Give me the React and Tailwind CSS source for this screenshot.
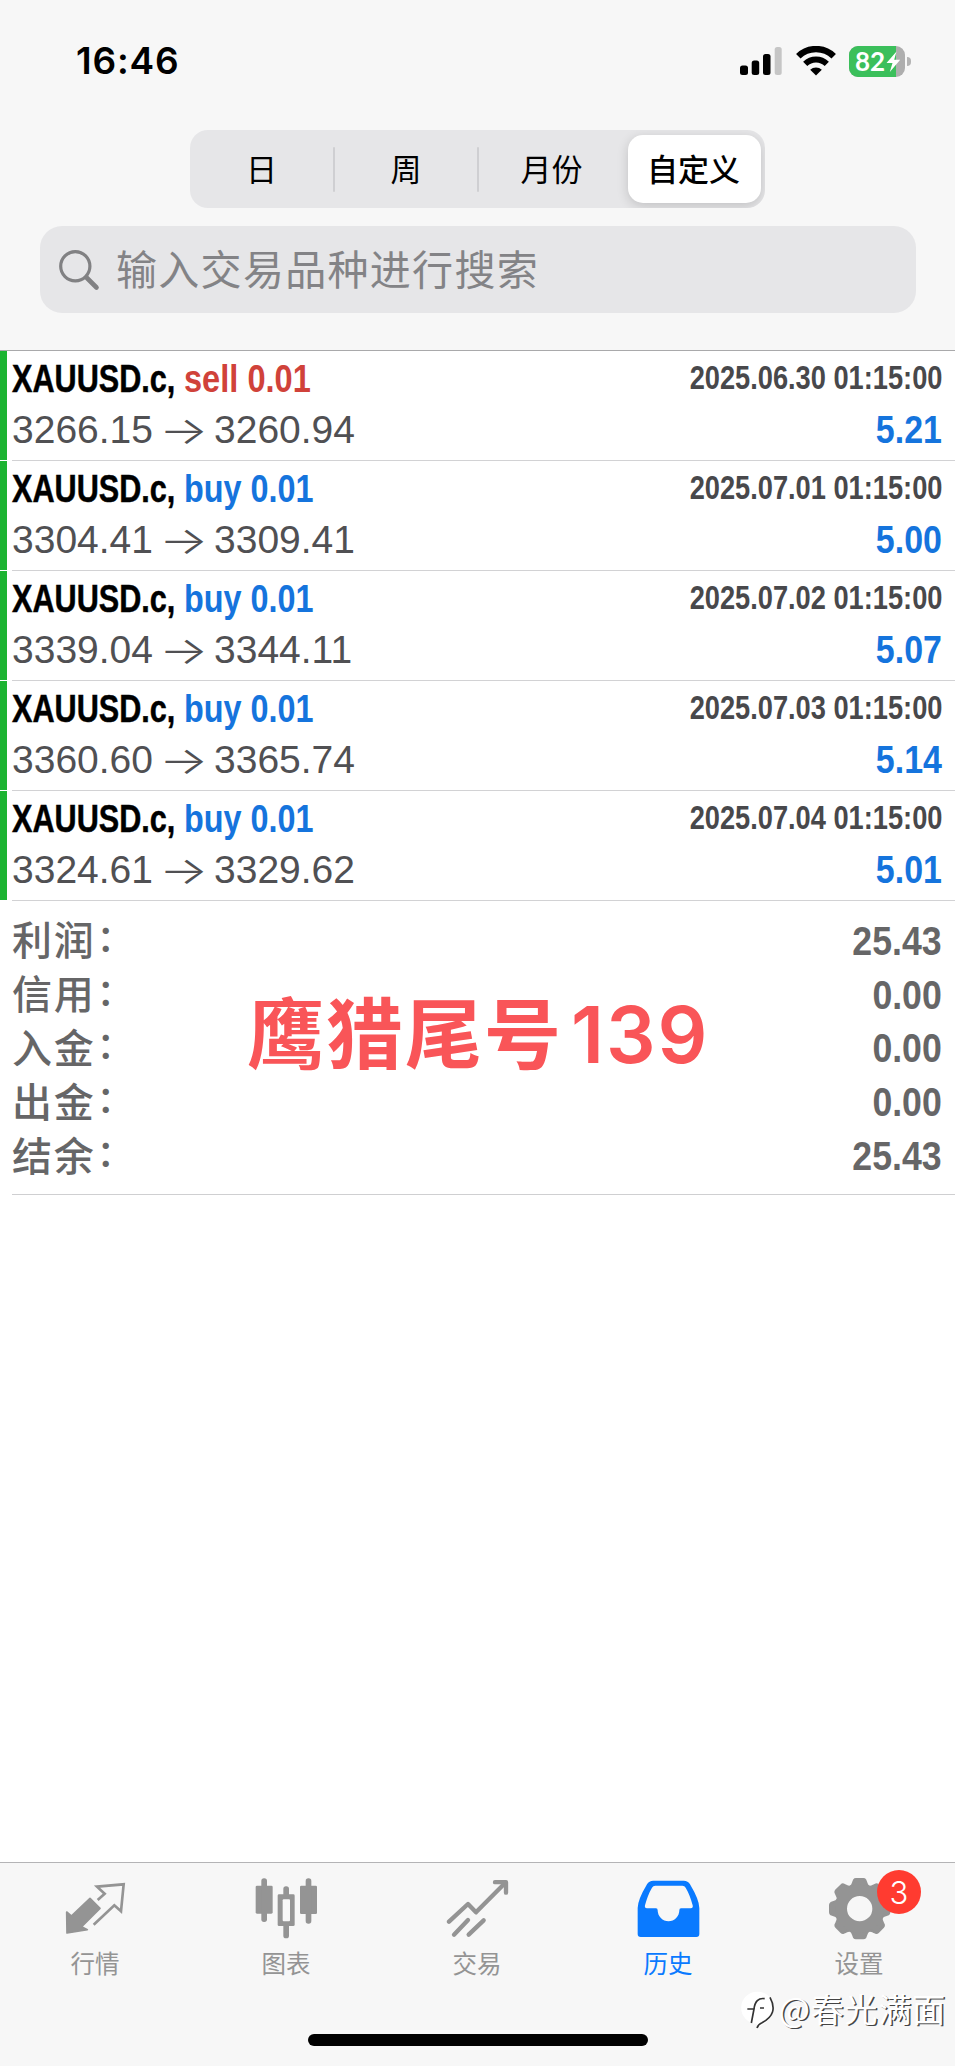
import React from "react";

const deals = [
  { side: "sell", volume: "0.01", open: "3266.15", close: "3260.94", time: "2025.06.30 01:15:00", profit: "5.21" },
  { side: "buy", volume: "0.01", open: "3304.41", close: "3309.41", time: "2025.07.01 01:15:00", profit: "5.00" },
  { side: "buy", volume: "0.01", open: "3339.04", close: "3344.11", time: "2025.07.02 01:15:00", profit: "5.07" },
  { side: "buy", volume: "0.01", open: "3360.60", close: "3365.74", time: "2025.07.03 01:15:00", profit: "5.14" },
  { side: "buy", volume: "0.01", open: "3324.61", close: "3329.62", time: "2025.07.04 01:15:00", profit: "5.01" },
];

const summary = [
  { label: "利润", value: "25.43" },
  { label: "信用", value: "0.00" },
  { label: "入金", value: "0.00" },
  { label: "出金", value: "0.00" },
  { label: "结余", value: "25.43" },
];

const StatusBar = () => (
  <div className="flex h-[130px] items-start justify-between pl-[76px] pr-[44px] pt-[38px]">
    <div className="font-['Inter',sans-serif] text-[37px] leading-[46px] font-semibold tracking-[0.8px] text-black">16:46</div>
    <div className="flex h-[46px] items-center">
      <svg className="mr-[14px]" width="42" height="28" viewBox="0 0 42 28">
        <rect x="0" y="18.5" width="8" height="9.5" rx="2.5" />
        <rect x="11.7" y="13.5" width="7.5" height="14.5" rx="2.5" />
        <rect x="23" y="7" width="7.5" height="21" rx="2.5" />
        <rect x="34.7" y="0" width="7" height="28" rx="2.5" fill="#c6c6c6" />
      </svg>
      <svg className="mr-[13px]" width="40" height="30" viewBox="0 0 40 30">
        <path d="M2.3 10.2A25.5 25.5 0 0 1 37.7 10.2" fill="none" stroke="#000" strokeWidth="6.4" />
        <path d="M9.2 17.9A15.6 15.6 0 0 1 30.8 17.9" fill="none" stroke="#000" strokeWidth="6" />
        <path d="M14.2 23.7A8.4 8.4 0 0 1 25.8 23.7L20 29.5Z" />
      </svg>
      <div className="relative flex h-[31px] w-[56px] items-center overflow-hidden rounded-[9px] bg-[#aeaeae]">
        <div className="flex h-full w-[47px] items-center bg-[#3bbf5b] pb-[1px] pl-[6px] font-['Lato',sans-serif] text-[26px] leading-none font-bold text-white">82</div>
        <svg className="absolute left-[37px] top-[5px]" width="15" height="22" viewBox="0 0 15 22">
          <path d="M10.5 0.5L0.5 12H6.5L3.8 21L14.2 8.8H8.2Z" fill="#fff" />
        </svg>
      </div>
      <div className="ml-[2px] h-[9px] w-[4px] rounded-r-full bg-[#b4b4b4]" />
    </div>
  </div>
);

const PeriodTabs = () => (
  <div className="ml-[190px] flex h-[78px] w-[575px] items-center overflow-hidden rounded-[18px] bg-[#e6e6e8] text-[31px] leading-none text-black">
    <div className="w-[143px] pb-[4px] text-center">日</div>
    <div className="h-[45px] w-[2px] rounded bg-[#cfcfd2]" />
    <div className="w-[142px] pb-[4px] text-center">周</div>
    <div className="h-[45px] w-[2px] rounded bg-[#cfcfd2]" />
    <div className="w-[145px] pb-[4px] text-center">月份</div>
    <div className="ml-[4px] flex h-[68px] w-[133px] items-center justify-center rounded-[15px] bg-white pr-[2px] pb-[4px] font-medium shadow-[0_3px_12px_rgba(0,0,0,0.16)]">
      自定义
    </div>
  </div>
);

const SearchField = () => (
  <div className="mt-[18px] ml-[40px] flex h-[87px] w-[876px] items-center rounded-[22px] bg-[#e6e6e8] pl-[18px]">
    <svg width="42" height="42" viewBox="0 0 42 42" fill="none" stroke="#818183" strokeLinecap="round">
      <circle cx="17.3" cy="17.3" r="14.6" strokeWidth="3.2" />
      <path d="M28.5 28.5L38.5 38.5" strokeWidth="4.6" />
    </svg>
    <span className="ml-[16px] pb-[4px] text-[41px] leading-none tracking-[1.3px] text-[#838386]">输入交易品种进行搜索</span>
  </div>
);

const DealRow = ({ deal }) => (
  <div className="flex h-[110px]">
    <div className="mb-px w-[7px] bg-[#1cb432]" />
    <div className="ml-[5px] flex-1 border-b border-[#d2d2d4] pr-[13px]">
      <div className="flex h-[54px] items-center justify-between font-['Liberation_Sans',sans-serif] font-bold whitespace-nowrap">
        <div className="flex text-[39px] leading-none">
          <span className="w-[172px] origin-left scale-x-[0.785] text-black [-webkit-text-stroke:0.5px]">XAUUSD.c,</span>
          <span className={deal.side === "sell" ? "origin-left scale-x-[0.835] text-[#d0423a]" : "origin-left scale-x-[0.83] text-[#1574dd]"}>
            {deal.side} {deal.volume}
          </span>
        </div>
        <span className="origin-right scale-x-[0.825] pb-[2px] text-[33px] leading-none text-[#48484b]">{deal.time}</span>
      </div>
      <div className="flex h-[49px] items-center justify-between font-['Liberation_Sans',sans-serif] text-[39px] leading-none whitespace-nowrap">
        <div className="flex items-center text-[#505053]">
          <span className="w-[147px]">{deal.open}</span>
          <span className="w-[55px] origin-left scale-x-[1.36] font-['Inter',sans-serif] text-[38px] font-light">→</span>
          <span>{deal.close}</span>
        </div>
        <span className="origin-right scale-x-[0.87] font-bold text-[#1574dd]">{deal.profit}</span>
      </div>
    </div>
  </div>
);

const Summary = () => (
  <div className="relative ml-[12px] h-[294px] border-b border-[#cfcfd1] pt-[12px] pr-[13px] text-[#666667]">
    {summary.map((item) => (
      <div key={item.label} className="flex h-[53.8px] items-center justify-between">
        <div className="flex items-center pb-[3px] text-[40px] leading-none font-medium tracking-[1.8px]">
          <span>{item.label}</span>
          <span className="ml-px pb-[4px] text-[37px]">：</span>
        </div>
        <span className="origin-right scale-x-[0.87] pt-[3px] font-['Liberation_Sans',sans-serif] text-[41px] leading-none font-bold">{item.value}</span>
      </div>
    ))}
    {/* account note laid over the totals */}
    <div className="absolute top-[79px] left-[235px] flex items-center text-[77px] leading-[90px] font-bold whitespace-nowrap text-[#f95558]">
      <span className="tracking-[2px]">鹰猎尾号</span>
      <span className="ml-[8px] pt-[10px] font-['Inter',sans-serif] text-[78px] font-semibold tracking-[2px]">139</span>
    </div>
  </div>
);

const QuotesIcon = () => (
  <svg width="64" height="66" viewBox="0 0 192 198">
    <path d="M78 67L108 97L53 152L70 161L9 171L8 108L22 120Z" fill="currentColor" stroke="currentColor" strokeWidth="5" strokeLinejoin="round" />
    <path d="M101 72L122 53L99 32L179 25L171 106L151 88L89 146" fill="none" stroke="currentColor" strokeWidth="8" />
  </svg>
);

const ChartIcon = () => (
  <svg width="64" height="66" viewBox="3 0 192 198" fill="currentColor">
    <rect x="5" y="29" width="51" height="84" rx="4" />
    <rect x="22" y="7" width="17" height="131" rx="8" />
    <rect x="138" y="29" width="51" height="85" rx="4" />
    <rect x="155" y="7" width="17" height="136" rx="8" />
    <rect x="88" y="31" width="17" height="156" rx="8" />
    <rect x="71" y="55" width="51" height="95" rx="4" />
    <rect x="86" y="70" width="22" height="66" rx="3" fill="#f7f7f7" />
  </svg>
);

const TradeIcon = () => (
  <svg width="64" height="66" viewBox="0 0 192 198" fill="none" stroke="currentColor" strokeWidth="13" strokeLinecap="round" strokeLinejoin="round">
    <path d="M9 137L66 84L90 109L178 20" />
    <path d="M147 18.5H180V50" />
    <path d="M66 132L24 176M113 133L68 176" />
  </svg>
);

const HistoryIcon = () => (
  <svg width="64" height="66" viewBox="0 0 192 198">
    <path
      fillRule="evenodd"
      fill="currentColor"
      d="M49 14H140Q153 14 159 25Q187 72 187 96V174Q187 183 178 183H11Q2 183 2 174V96Q2 72 30 25Q36 14 49 14ZM55 29Q48 29 45 35Q32 57 24 88Q22 97 30 97H57Q62 97 62 103A32.5 32.5 0 0 0 127 103Q127 97 132 97H161Q169 97 167 88Q159 57 146 35Q143 29 136 29Z"
    />
  </svg>
);

const GearIcon = () => (
  <svg width="64" height="66" viewBox="0 0 192 198">
    <g transform="translate(95 98)" fill="currentColor" stroke="currentColor" strokeWidth="6" strokeLinejoin="round">
      {[0, 45, 90, 135, 180, 225, 270, 315].map((angle) => (
        <path key={angle} transform={`rotate(${angle})`} d="M-28 -66Q-22 -70 -20 -78L-17 -86Q-15 -89 -11 -89H11Q15 -89 17 -86L20 -78Q22 -70 28 -66L20 -50H-20Z" />
      ))}
      <circle r="55" fill="none" strokeWidth="34" />
    </g>
  </svg>
);

const tabs = [
  { label: "行情", Icon: QuotesIcon },
  { label: "图表", Icon: ChartIcon },
  { label: "交易", Icon: TradeIcon },
  { label: "历史", Icon: HistoryIcon, active: true },
  { label: "设置", Icon: GearIcon, badge: 3 },
];

const TabBar = () => (
  <div className="relative h-[204px] border-t border-[#b4b4b6] bg-[#f7f7f7]">
    <div className="flex pt-[13px]">
      {tabs.map(({ label, Icon, active, badge }) => (
        <div key={label} className={active ? "relative flex flex-1 flex-col items-center text-[#0a7aff]" : "relative flex flex-1 flex-col items-center text-[#949494]"}>
          <Icon />
          <span className="mt-[8px] mb-[2px] pr-px text-[24.5px] leading-[26px]">{label}</span>
          {badge && (
            <span className="absolute -top-[6px] left-[113px] flex h-[44px] w-[44px] items-center justify-center rounded-full bg-[#ff3b30] font-['Inter',sans-serif] text-[31px] leading-none font-light text-white">
              {badge}
            </span>
          )}
        </div>
      ))}
    </div>
    <div className="mt-[56px] ml-[308px] h-[12px] w-[340px] rounded-full bg-black" />
    <div className="absolute top-[123px] right-[9px] flex items-center text-[33px] leading-[44px] tracking-[0.8px] whitespace-nowrap text-white [text-shadow:1.5px_1px_0_#444]">
      <svg className="mt-[3px] mr-[3px]" width="36" height="40" viewBox="0 0 108 120">
        <path d="M53 5A48 48 0 1 0 50 101Q54 110 48 114Q100 95 101 52A48 48 0 0 0 53 5Z" fill="#fff" />
        <path d="M90 22Q117 72 66 98Q55 102 51 114" fill="none" stroke="#333" strokeWidth="5" />
        <path d="M22 57H42L34 99M42 57Q46 22 74 26M60 54H72" fill="none" stroke="#333" strokeWidth="5" />
      </svg>
      <span>@春光满面</span>
    </div>
  </div>
);

const App = () => {
  return (
    <div className="flex h-[2066px] w-[955px] flex-col overflow-hidden bg-white font-['Noto_Sans_CJK_SC',sans-serif]">
      <div className="h-[351px] border-b border-[#a9a9ab] bg-[#f7f7f7]">
        <StatusBar />
        <PeriodTabs />
        <SearchField />
      </div>
      <div className="flex-1">
        {deals.map((deal) => (
          <DealRow key={deal.time} deal={deal} />
        ))}
        <Summary />
      </div>
      <TabBar />
    </div>
  );
};

export default App;
